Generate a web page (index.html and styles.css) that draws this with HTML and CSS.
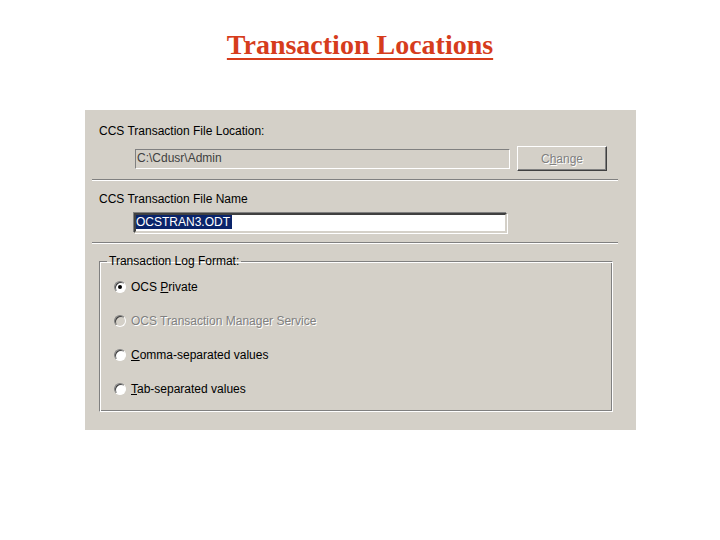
FILE: index.html
```html
<!DOCTYPE html>
<html>
<head>
<meta charset="utf-8">
<title>Transaction Locations</title>
<link rel="stylesheet" href="styles.css">
</head>
<body>
<h1 class="title">Transaction Locations</h1>
<div class="dialog">
  <div class="label">CCS Transaction File Location:</div>
  <div class="row">
    <div class="field disabled">C:\Cdusr\Admin</div>
    <div class="button disabled"><span>C<u>h</u>ange</span></div>
  </div>
  <div class="sep"></div>
  <div class="label">CCS Transaction File Name</div>
  <div class="row single">
    <div class="field edit"><span class="sel">OCSTRAN3.ODT</span></div>
  </div>
  <div class="sep"></div>
  <fieldset class="group">
    <legend>Transaction Log Format:</legend>
    <div class="radio"><span class="dot checked"></span><span>OCS <u>P</u>rivate</span></div>
    <div class="radio off"><span class="dot"></span><span>OCS Transaction Manager Service</span></div>
    <div class="radio"><span class="dot"></span><span><u>C</u>omma-separated values</span></div>
    <div class="radio"><span class="dot"></span><span><u>T</u>ab-separated values</span></div>
  </fieldset>
</div>
</body>
</html>
```
FILE: styles.css
```css
html, body {
  margin: 0;
  padding: 0;
  background: #ffffff;
}
.title {
  margin: 0;
  padding-top: 30px;
  height: 80px;
  box-sizing: border-box;
  text-align: center;
  font-family: "Liberation Serif", serif;
  font-weight: bold;
  font-size: 28px;
  line-height: 30px;
  color: #d63c1c;
  text-decoration: underline;
  text-decoration-thickness: 2px;
  text-underline-offset: 4px;
}
.dialog {
  margin: 30px 0 0 85px;
  width: 551px;
  height: 320px;
  box-sizing: border-box;
  background: #d4d0c8;
  padding: 14px 0 0 14px;
  font-family: "Liberation Sans", Arial, sans-serif;
  font-size: 12px;
  color: #000;
}
.label {
  height: 14px;
  line-height: 14px;
}
.row {
  display: flex;
  align-items: center;
  gap: 7px;
  margin: 8px 0 0 36px;
  height: 25px;
}
.row.single {
  height: 20px;
  margin-top: 7px;
}
.field {
  width: 375px;
  height: 20px;
  box-sizing: border-box;
  line-height: 16px;
  padding-left: 1px;
  border: 1px solid;
  border-color: #808080 #ffffff #ffffff #808080;
}
.field.disabled {
  background: #d4d0c8;
  color: #404040;
}
.field.edit {
  width: 373px;
  background: #ffffff;
  border: 2px solid;
  border-color: #404040 #d4d0c8 #d4d0c8 #404040;
  box-shadow: -1px -1px 0 #808080, 1px 1px 0 #ffffff;
  line-height: 14px;
  padding-left: 0;
  margin-left: -1px;
}
.sel {
  background: #0a246a;
  color: #ffffff;
  display: inline-block;
  padding-right: 2px;
}
.button {
  width: 90px;
  height: 25px;
  box-sizing: border-box;
  display: flex;
  align-items: center;
  justify-content: center;
  border: 1px solid;
  border-color: #ffffff #404040 #404040 #ffffff;
  box-shadow: inset -1px -1px 0 #808080;
  color: #808080;
  text-shadow: 1px 1px 0 #ffffff;
  font-size: 12px;
}
.sep {
  margin: 9px 0 0 -7px;
  width: 526px;
  height: 0;
  border-top: 1px solid #808080;
  border-bottom: 1px solid #ffffff;
}
.sep + .label {
  margin-top: 11px;
}
.row + .sep {
  margin-top: 8px;
}
.row.single + .sep {
  margin-top: 9px;
}
.group {
  margin: 11px 0 0 0;
  width: 514px;
  height: 157px;
  box-sizing: border-box;
  border: 1px solid;
  border-color: #808080 #ffffff #ffffff #808080;
  box-shadow: inset 1px 1px 0 #ffffff, inset -1px -1px 0 #808080;
  padding: 13px 0 0 14px;
}
.group legend {
  padding: 0 2px;
  margin-left: -7px;
  font-size: 12px;
  line-height: 12px;
}
.radio {
  display: flex;
  align-items: center;
  gap: 5px;
  height: 14px;
  margin-bottom: 20px;
  font-size: 12px;
}
.radio:last-child {
  margin-bottom: 0;
}
.dot {
  width: 12px;
  height: 12px;
  box-sizing: border-box;
  border-radius: 50%;
  background: #ffffff;
  border: 1px solid;
  border-color: #808080 #ffffff #ffffff #808080;
  box-shadow: inset 1px 1px 0 #404040;
  display: flex;
  align-items: center;
  justify-content: center;
  flex: none;
}
.dot.checked::after {
  content: "";
  width: 4px;
  height: 4px;
  border-radius: 50%;
  background: #000;
}
.radio.off {
  color: #808080;
  text-shadow: 1px 1px 0 #ffffff;
}
.radio.off .dot {
  background: #d4d0c8;
}
```
